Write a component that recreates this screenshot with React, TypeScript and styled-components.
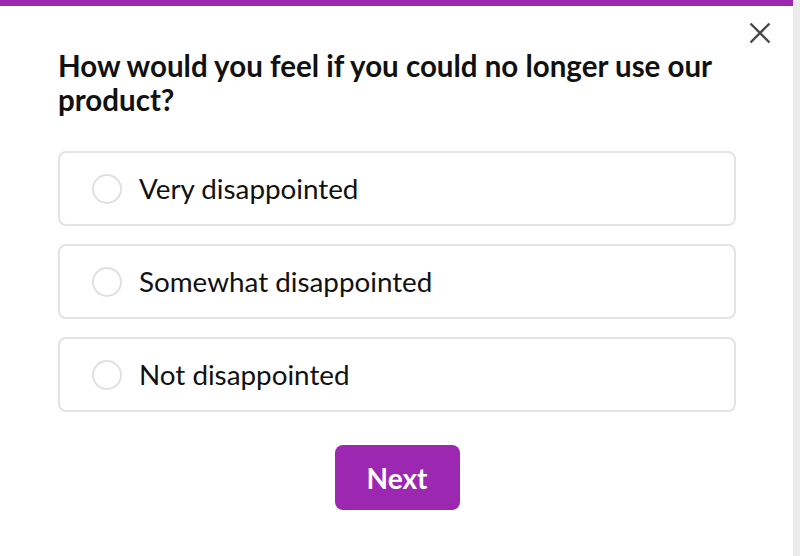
import * as React from 'react'
import styled, { createGlobalStyle } from 'styled-components'

const GlobalStyle = createGlobalStyle`
    html, body {
        margin: 0;
        padding: 0;
        background: #ffffff;
    }
    body {
        font-family: Lato, 'Open Sans', sans-serif;
        -webkit-font-smoothing: antialiased;
    }
`

const options = ['Very disappointed', 'Somewhat disappointed', 'Not disappointed']

const App: React.FC = () => {
    const [selected, setSelected] = React.useState<number | null>(null)

    return (
        <>
            <GlobalStyle />
            <Page>
                <Modal>
                    <CloseButton aria-label="Close">
                        <svg width="22" height="22" viewBox="0 0 22 22">
                            <path d="M1.5 1.5 L20.5 20.5 M20.5 1.5 L1.5 20.5" stroke="#4a4a4a" strokeWidth="2.4" />
                        </svg>
                    </CloseButton>
                    <Title>How would you feel if you could no longer use our product?</Title>
                    <OptionList>
                        {options.map((label, i) => (
                            <Option key={label} $active={selected === i} onClick={() => setSelected(i)}>
                                <Radio $active={selected === i} />
                                <OptionLabel>{label}</OptionLabel>
                            </Option>
                        ))}
                    </OptionList>
                    <Footer>
                        <NextButton>Next</NextButton>
                    </Footer>
                </Modal>
                <Gutter />
            </Page>
        </>
    )
}

export default App

const Page = styled.div`
    display: flex;
    height: 556px;
    overflow: hidden;
`

const Modal = styled.div`
    position: relative;
    flex: 1;
    border-top: 6px solid #9c27b0;
    padding: 43px 57px 0 58px;
    box-sizing: border-box;
`

const Gutter = styled.div`
    width: 7px;
    background: #ebebeb;
`

const CloseButton = styled.button`
    position: absolute;
    top: 14.5px;
    right: 21px;
    width: 24px;
    height: 24px;
    padding: 0;
    border: none;
    background: none;
    display: flex;
    align-items: center;
    justify-content: center;
    cursor: pointer;
`

const Title = styled.h2`
    margin: 0 0 34px;
    font-size: 29.5px;
    line-height: 34px;
    font-weight: 700;
    color: #111111;
    max-width: 670px;
`

const OptionList = styled.div`
    display: flex;
    flex-direction: column;
    gap: 18px;
`

const Option = styled.label<{ $active: boolean }>`
    display: flex;
    align-items: center;
    gap: 17px;
    height: 75px;
    box-sizing: border-box;
    padding: 0 32px;
    border: 2px solid ${p => (p.$active ? '#9c27b0' : '#e2e3e5')};
    border-radius: 8px;
    cursor: pointer;
`

const Radio = styled.span<{ $active: boolean }>`
    width: 30px;
    height: 30px;
    box-sizing: border-box;
    border-radius: 50%;
    border: 2px solid ${p => (p.$active ? '#9c27b0' : '#dfe0e2')};
    background: ${p => (p.$active ? 'radial-gradient(#9c27b0 40%, #fff 45%)' : '#fff')};
    flex-shrink: 0;
`

const OptionLabel = styled.span`
    font-size: 27.8px;
    color: #111111;
`

const Footer = styled.div`
    display: flex;
    justify-content: center;
    padding-top: 33px;
`

const NextButton = styled.button`
    width: 125px;
    height: 65px;
    border: none;
    border-radius: 8px;
    background: #9c27b0;
    color: #ffffff;
    font-family: Lato, sans-serif;
    font-size: 28px;
    font-weight: 700;
    cursor: pointer;
`
